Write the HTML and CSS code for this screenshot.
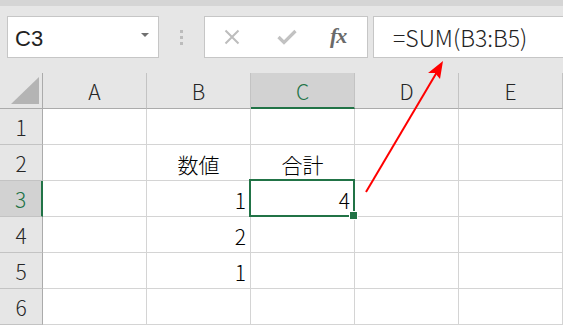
FILE: index.html
```html
<!DOCTYPE html>
<html lang="ja">
<head>
<meta charset="utf-8">
<link rel="stylesheet" href="styles.css">
</head>
<body>
<div class="app">
  <div class="topstrip"></div>
  <div class="toolbar">
    <div class="namebox">
      <span class="name">C3</span>
      <span class="caret"></span>
    </div>
    <div class="dots"><i></i><i></i><i></i></div>
    <div class="buttons">
      <svg class="ico" width="16" height="16" viewBox="0 0 16 16"><path d="M1.5 1.5 L14.5 14.5 M14.5 1.5 L1.5 14.5" stroke="#bdbdbd" stroke-width="2" fill="none"/></svg>
      <svg class="ico" width="20" height="16" viewBox="0 0 20 16"><path d="M1.5 8 L7 13.5 L18.5 2" stroke="#c2c2c2" stroke-width="3.2" fill="none"/></svg>
      <span class="fx">fx</span>
    </div>
    <div class="formula">=SUM(B3:B5)</div>
  </div>
  <div class="sheet">
    <div class="corner"><span class="tri"></span></div>
    <div class="ch">A</div>
    <div class="ch">B</div>
    <div class="ch sel">C</div>
    <div class="ch">D</div>
    <div class="ch">E</div>

    <div class="rh">1</div>
    <div class="c"></div><div class="c"></div><div class="c"></div><div class="c"></div><div class="c"></div>

    <div class="rh">2</div>
    <div class="c"></div><div class="c ctr">数値</div><div class="c ctr">合計</div><div class="c"></div><div class="c"></div>

    <div class="rh sel">3</div>
    <div class="c"></div><div class="c num">1</div><div class="c num">4</div><div class="c"></div><div class="c"></div>

    <div class="rh">4</div>
    <div class="c"></div><div class="c num">2</div><div class="c"></div><div class="c"></div><div class="c"></div>

    <div class="rh">5</div>
    <div class="c"></div><div class="c num">1</div><div class="c"></div><div class="c"></div><div class="c"></div>

    <div class="rh">6</div>
    <div class="c"></div><div class="c"></div><div class="c"></div><div class="c"></div><div class="c"></div>

    <div class="selbox"><span class="handle"></span></div>
  </div>
  <svg class="arrow" width="563" height="325" viewBox="0 0 563 325">
    <line x1="366" y1="192" x2="437" y2="72" stroke="#ff0000" stroke-width="2"/>
    <polygon points="443,61 428,73 435,73 440,79" fill="#ff0000"/>
  </svg>
</div>
</body>
</html>
```

FILE: styles.css
```css
* { box-sizing: border-box; }
html, body {
  margin: 0;
  padding: 0;
  background: #e6e6e6;
  font-family: "Noto Sans CJK JP", "Noto Sans", sans-serif;
  font-weight: 300;
  color: #000;
  overflow: hidden;
}
.app {
  position: relative;
  width: 563px;
  height: 325px;
}
.topstrip {
  height: 6px;
  background: #d5d5d5;
}
.toolbar {
  height: 67px;
  display: flex;
  align-items: flex-start;
  padding-top: 10px;
  padding-left: 7px;
}
.namebox {
  width: 152px;
  height: 42px;
  background: #fff;
  border: 1px solid #c6c6c6;
  display: flex;
  align-items: center;
  justify-content: space-between;
  padding: 0 9px 0 7px;
}
.name {
  font-family: "Liberation Sans", Arial, sans-serif;
  font-weight: 400;
  font-size: 22px;
  color: #222;
  padding-top: 4px;
}
.caret {
  width: 0;
  height: 0;
  border-left: 4px solid transparent;
  border-right: 4px solid transparent;
  border-top: 4px solid #707070;
  margin-top: -4px;
}
.dots {
  width: 45px;
  height: 42px;
  display: flex;
  flex-direction: column;
  align-items: center;
  justify-content: center;
  gap: 3px;
  padding-right: 1px;
  padding-top: 1px;
}
.dots i {
  display: block;
  width: 3px;
  height: 3px;
  background: #bcbcbc;
}
.buttons {
  width: 164px;
  height: 42px;
  background: #fff;
  border: 1px solid #c6c6c6;
  display: flex;
  align-items: center;
  padding-left: 19px;
  gap: 0;
}
.buttons .ico:nth-child(1) { margin-right: 37px; }
.buttons .ico:nth-child(2) { margin-right: 33px; }
.fx {
  font-family: "Liberation Serif", "DejaVu Serif", serif;
  font-style: italic;
  font-weight: bold;
  font-size: 22px;
  color: #6a6a6a;
  letter-spacing: -1px;
  margin-top: -2px;
}
.formula {
  margin-left: 5px;
  flex: 1;
  height: 42px;
  background: #fff;
  border: 1px solid #c6c6c6;
  border-right: none;
  font-size: 23px;
  line-height: 40px;
  padding-left: 19px;
  color: #222;
}
.sheet {
  position: relative;
  display: grid;
  grid-template-columns: 43px repeat(5, 104px);
  grid-template-rows: repeat(7, 36px);
}
.corner {
  position: relative;
  border-right: 1px solid #ababab;
  border-bottom: 1px solid #ababab;
}
.tri {
  position: absolute;
  left: 11px;
  top: 4px;
  width: 28px;
  height: 27px;
  background: #b4b4b4;
  clip-path: polygon(100% 0, 100% 100%, 0 100%);
}
.ch {
  border-right: 1px solid #c3c3c3;
  border-bottom: 1px solid #ababab;
  display: flex;
  align-items: center;
  justify-content: center;
  font-size: 21px;
  color: #262626;
  padding-top: 1px;
}
.ch.sel {
  background: #d2d2d2;
  border-bottom: 2px solid #217346;
  color: #217346;
  padding-top: 2px;
}
.rh {
  border-right: 1px solid #ababab;
  border-bottom: 1px solid #c3c3c3;
  display: flex;
  align-items: center;
  justify-content: center;
  font-size: 21px;
  color: #262626;
  padding-top: 1px;
}
.rh.sel {
  background: #d2d2d2;
  border-right: 2px solid #217346;
  color: #217346;
}
.c {
  background: #fff;
  border-right: 1px solid #d4d4d4;
  border-bottom: 1px solid #d4d4d4;
  display: flex;
  align-items: center;
  font-size: 21px;
  padding-top: 2px;
}
.c.ctr { justify-content: center; }
.c.num { justify-content: flex-end; padding-right: 4px; }
.selbox {
  position: absolute;
  left: 249px;
  top: 106px;
  width: 106px;
  height: 38px;
  border: 2px solid #217346;
  pointer-events: none;
}
.handle {
  position: absolute;
  right: -4px;
  bottom: -4px;
  width: 7px;
  height: 7px;
  background: #217346;
  outline: 1px solid #fff;
}
.arrow {
  position: absolute;
  left: 0;
  top: 0;
  pointer-events: none;
}
```
